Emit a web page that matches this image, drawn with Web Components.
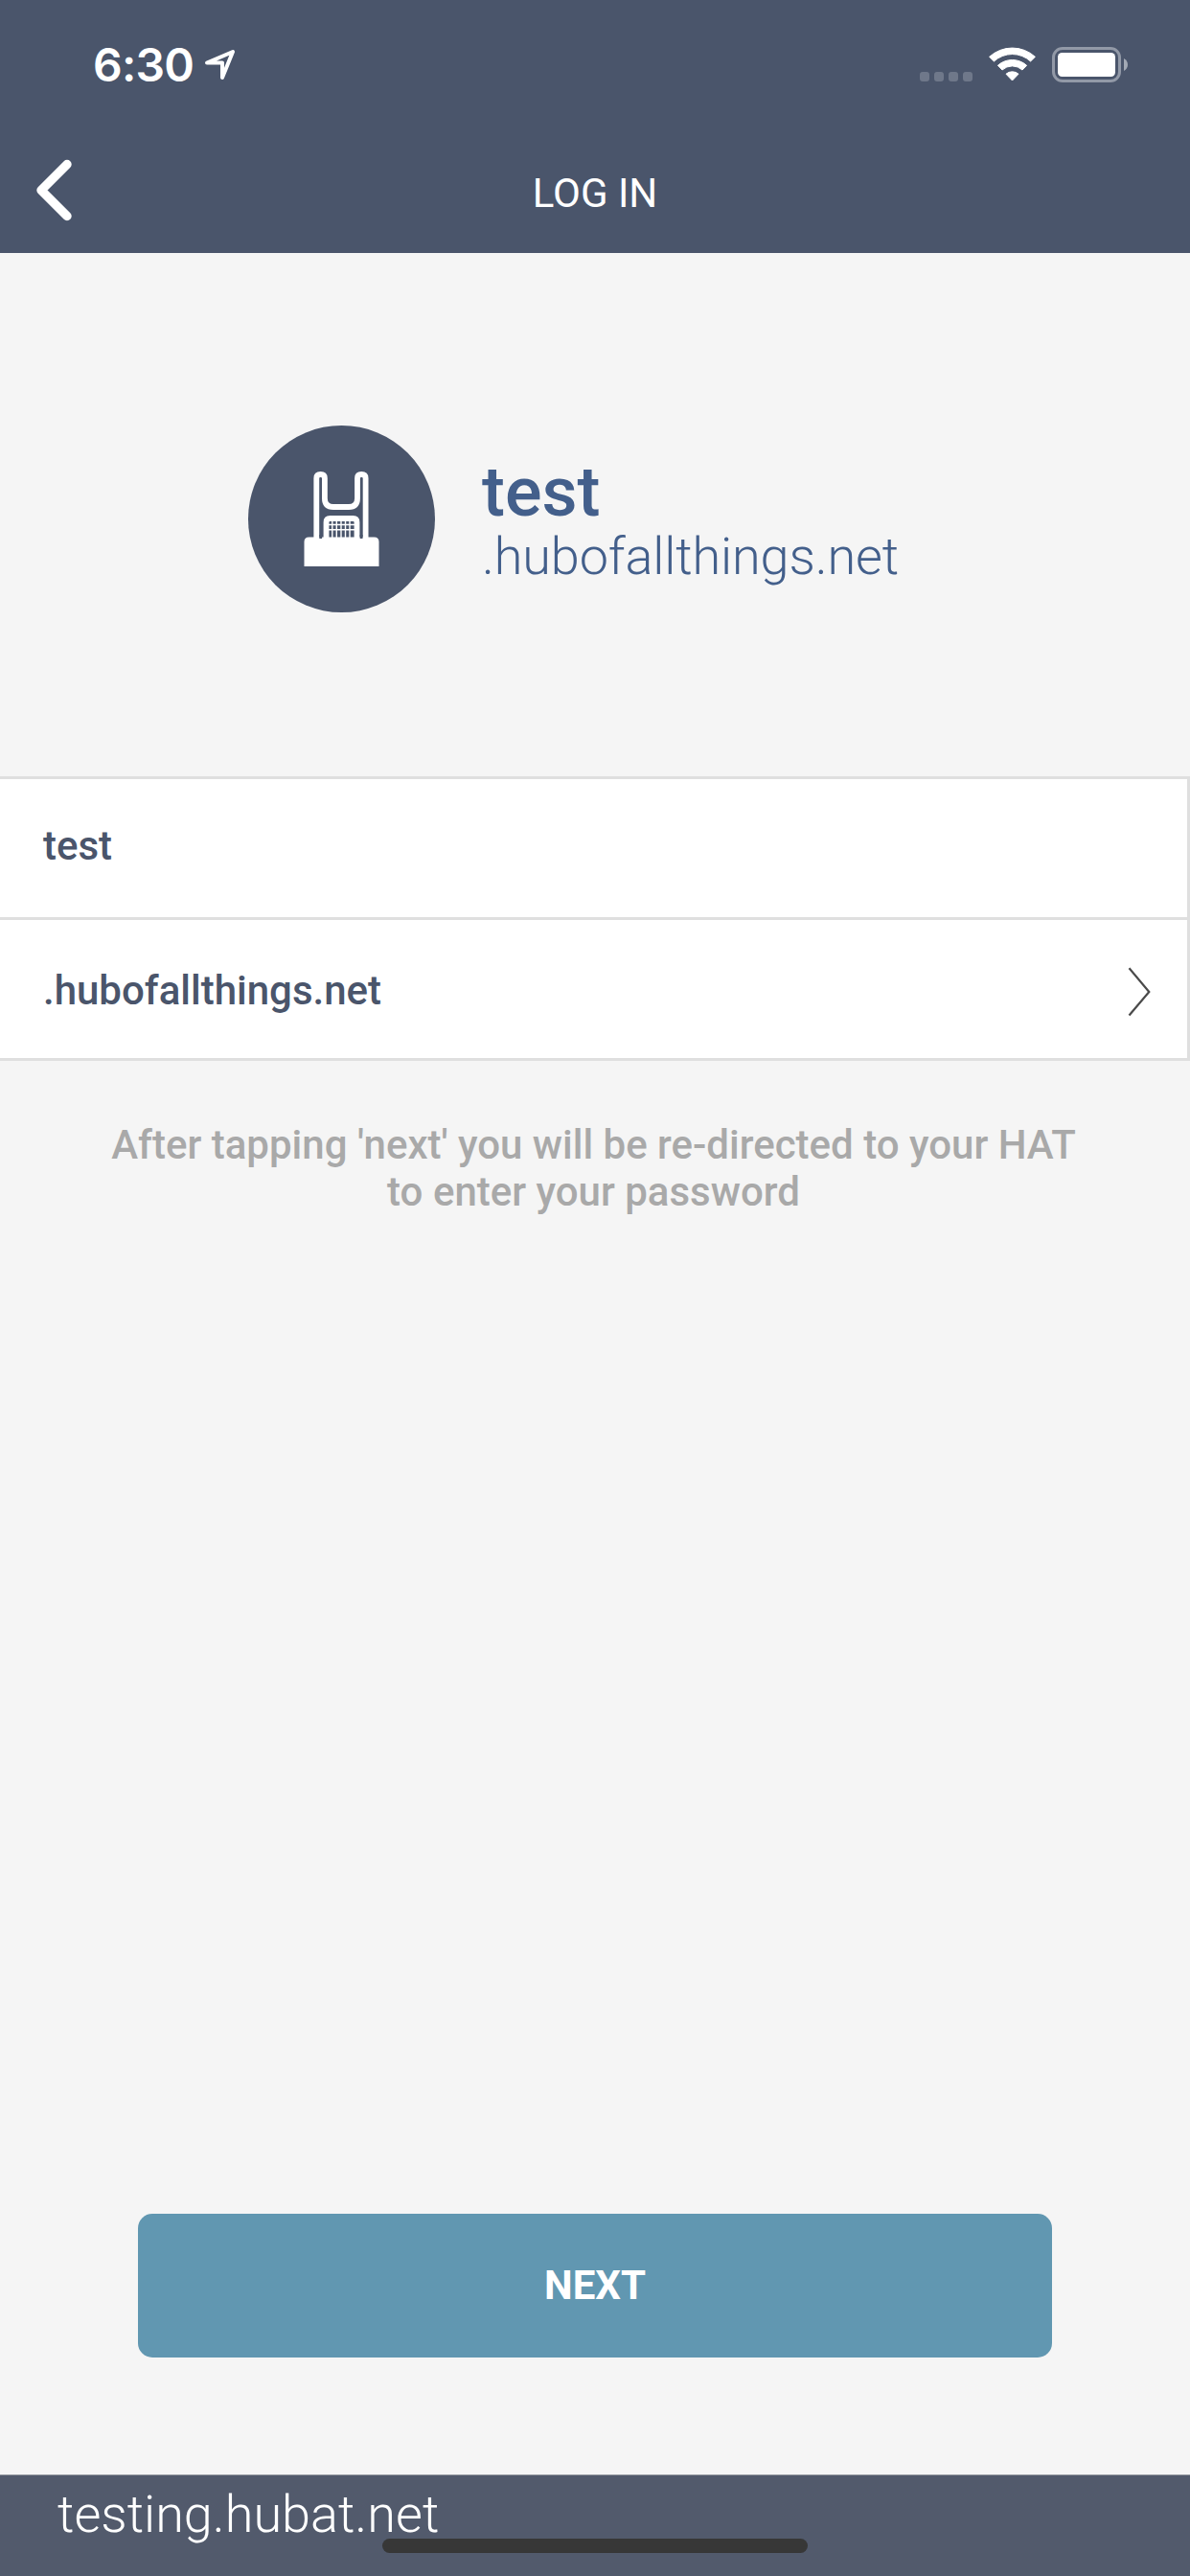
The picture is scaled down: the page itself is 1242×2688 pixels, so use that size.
<!DOCTYPE html>
<html lang="en">
<head>
<meta charset="utf-8">
<title>Log in</title>
<style>
html,body{margin:0;padding:0;background:#f5f5f5}
body{font-family:Roboto,"Liberation Sans",sans-serif}
</style>
</head>
<body>
<login-screen></login-screen>
<script>
const define = (name, html) => customElements.define(name, class extends HTMLElement {
  constructor() {
    super();
    this.attachShadow({ mode: 'open' }).innerHTML = html;
  }
});

define('status-bar', `
<style>
:host{display:flex;height:132px;box-sizing:border-box;padding:0 64px 0 97px;justify-content:space-between;align-items:flex-start;color:#fff}
.left,.right{display:flex;align-items:flex-start}
.time{font:600 48px/60px Inter,sans-serif;letter-spacing:-.8px;margin-top:38px;width:107px;white-space:nowrap}
svg{display:block}
.loc{margin:50px 0 0 8px}
.right{padding-top:48px}
.wifi{margin-left:14px}
.bat{margin-left:15px}
</style>
<div class="left"><span class="time">6:30</span>
<svg class="loc" width="36" height="36" viewBox="0 0 36 36" fill="none" stroke="#fff" stroke-width="4" stroke-linejoin="round"><path d="M4 15.600 31 4 20 31V15.600Z"/></svg></div>
<div class="right">
<svg width="58" height="40" viewBox="0 0 58 40" fill="#6f788a"><rect x="0" y="27" width="10" height="10" rx="3"/><rect x="15" y="27" width="10" height="10" rx="3"/><rect x="30" y="27" width="10" height="10" rx="3"/><rect x="45" y="27" width="10" height="10" rx="3"/></svg>
<svg class="wifi" width="51" height="40" viewBox="0 0 51 40"><g fill="#fff" stroke="#fff" stroke-width="1" stroke-linejoin="round"><path d="M.6 11.300A35.500 35.500 0 0 1 48.400 11.300L43.600 16A28.200 28.200 0 0 0 5.400 16Z"/><path d="M9.400 20.300A22.500 22.500 0 0 1 39.600 20.300L35 25A15.500 15.500 0 0 0 14 25Z"/><path d="M18 29.200A10 10 0 0 1 31 29.200L24.500 36Z"/></g></svg>
<svg class="bat" width="80" height="40" viewBox="0 0 80 40"><rect x="1.500" y="2.500" width="69" height="34" rx="9.500" fill="none" stroke="#9299a7" stroke-width="3"/><rect x="6" y="7" width="60" height="25" rx="4.500" fill="#fff"/><path d="M75 13c5.300 2.500 5.300 10.500 0 13Z" fill="#a4aab5"/></svg>
</div>`);

define('nav-bar', `
<style>
:host{display:grid;grid-template-columns:1fr auto 1fr;height:132px;color:#fff}
svg{display:block;margin:32px 0 0 36px}
.title{font-size:42px;line-height:50px;margin-top:45px;white-space:nowrap}
</style>
<svg width="44" height="68" viewBox="0 0 44 68" fill="none" stroke="#fff" stroke-width="9.400" stroke-linecap="round" stroke-linejoin="round"><path d="M34 7.500 7 34.500 34 61.500"/></svg>
<span class="title"><slot></slot></span>`);

define('hat-logo', `
<style>:host{display:block;width:195px;height:195px}svg{display:block}</style>
<svg width="195" height="195" viewBox="0 0 195 195"><circle cx="97.500" cy="97.500" r="97.500" fill="#4a556b"/>
<g fill="none" stroke="#fff" stroke-width="5.800"><path d="M71.300 120V55q0-4 4.300-4t4.300 4V76q0 9 9 9H105q9 0 9-9V55q0-4 4.300-4t4.300 4V120"/><path d="M81.500 120V101q0-4 4-4H109.500q4 0 4 4V120"/></g>
<g fill="none" stroke="#fff" stroke-width="1.400"><path d="M87.800 98v20M92.300 98v20M97 98v20M101.500 98v20M106 98v20"/><path d="M83 103.500h30M83 108.700h30"/></g>
<path d="M58.500 147V121.500q0-5 5-5H131.500q5 0 5 5V147Z" fill="#fff"/>
<path d="M74.300 114h2.800v4h-2.800ZM116.700 114h2.800v4h-2.800Z" fill="#4a556b"/></svg>`);

define('brand-header', `
<style>
:host{display:flex;height:546px;box-sizing:border-box;padding:180px 0 0 259px;align-items:flex-start;color:#435f8b}
.names{display:flex;flex-direction:column;margin:28px 0 0 49px;white-space:nowrap}
.name{font-weight:500;font-size:72px;line-height:84px}
.domain{font-weight:300;font-size:54px;line-height:64px;margin-top:-7px;letter-spacing:-.14px}
</style>
<hat-logo></hat-logo>
<div class="names"><span class="name"><slot name="name"></slot></span><span class="domain"><slot name="domain"></slot></span></div>`);

define('form-row', `
<style>
:host{display:flex;height:147px;box-sizing:border-box;border-top:3px solid #dfdfdf;justify-content:space-between;align-items:flex-start;padding:0 38px 0 45px;color:#4a556b;font-weight:500;font-size:42px;line-height:50px;white-space:nowrap}
.text{margin-top:var(--text-top,45px)}
svg{display:none;margin-top:48px}
:host([chevron]) svg{display:block}
</style>
<span class="text"><slot></slot></span>
<svg width="24" height="54" viewBox="0 0 24 54" fill="none" stroke="#4a4a4a" stroke-width="2.200"><path d="M1.500 2.200 22.300 27 1.500 51.500"/></svg>`);

define('form-list', `
<style>:host{display:block;background:#fff;border-right:3px solid #dfdfdf;border-bottom:3px solid #dfdfdf}</style><slot></slot>`);

define('hint-text', `
<style>:host{display:block;margin-top:63px;padding-right:3px;text-align:center;color:#a9a9a9;font-weight:500;font-size:42px;line-height:49px;white-space:nowrap}</style><slot></slot>`);

define('primary-button', `
<style>
:host{display:block;width:954px;margin:auto auto 122px}
button{display:block;width:100%;height:150px;border:0;border-radius:15px;background:#6197b1;color:#fff;font:700 42px/50px Roboto,sans-serif;padding:0}
</style><button><slot></slot></button>`);

define('account-bar', `
<style>
:host{display:block;position:relative;height:106px;box-sizing:border-box;border-top:1px solid #9a9da4;background:#525a6c;color:#fff;padding:9px 0 0 60px;font-weight:300;font-size:54px;line-height:64px;white-space:nowrap}
.home{position:absolute;left:399px;top:66px;width:444px;height:15px;border-radius:8px;background:#373737}
</style><slot></slot><div class="home"></div>`);

define('login-screen', `
<style>
:host{display:flex;flex-direction:column;width:1242px;height:2688px;overflow:hidden;background:#f5f5f5}
header{background:#4a556b;flex:none}
</style>
<header><status-bar></status-bar><nav-bar>LOG IN</nav-bar></header>
<brand-header><span slot="name">test</span><span slot="domain">.hubofallthings.net</span></brand-header>
<form-list><form-row style="--text-top:45px">test</form-row><form-row chevron style="--text-top:49px">.hubofallthings.net</form-row></form-list>
<hint-text>After tapping 'next' you will be re-directed to your HAT<br>to enter your password</hint-text>
<primary-button>NEXT</primary-button>
<account-bar>testing.hubat.net</account-bar>`);
</script>
</body>
</html>
